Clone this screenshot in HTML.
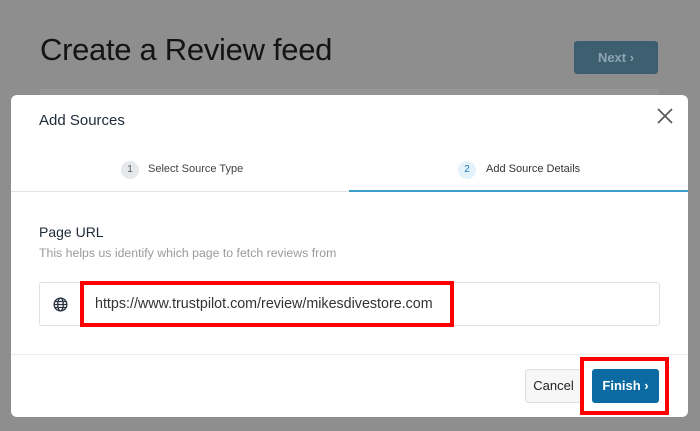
<!DOCTYPE html>
<html><head><style>
*{margin:0;padding:0;box-sizing:border-box}
body{width:700px;height:431px;background:#8e8e8f;font-family:"Liberation Sans",sans-serif;position:relative;overflow:hidden}
.a{position:absolute}
</style></head><body>
<div class="a" style="left:40px;top:32px;font-size:31px;color:#141414;letter-spacing:-0.3px">Create a Review feed</div>
<div class="a" style="left:574px;top:41px;width:84px;height:33px;background:#3d5f70;border-radius:3px;color:#8ea4b0;font-size:13px;font-weight:bold;text-align:center;line-height:33px">Next ›</div>
<div class="a" style="left:40px;top:89px;width:618px;height:8px;background:#959595"></div>
<div class="a" style="left:11px;top:95px;width:677px;height:322px;background:#fff;border-radius:6px"></div>
<div class="a" style="left:39px;top:112px;font-size:15px;color:#1e2a38">Add Sources</div>
<svg class="a" style="left:656px;top:107px" width="18" height="18"><path d="M2 2L16 16M16 2L2 16" stroke="#555" stroke-width="1.6"/></svg>
<div class="a" style="left:121px;top:161px;width:18px;height:18px;border-radius:50%;background:#e6e8ec;color:#555;font-size:10px;text-align:center;line-height:18px">1</div>
<div class="a" style="left:148px;top:163px;font-size:11px;color:#444">Select Source Type</div>
<div class="a" style="left:458px;top:161px;width:18px;height:18px;border-radius:50%;background:#e3f2fb;color:#1b77b0;font-size:10px;text-align:center;line-height:18px">2</div>
<div class="a" style="left:486px;top:163px;font-size:11px;color:#333">Add Source Details</div>
<div class="a" style="left:11px;top:191px;width:338px;height:1px;background:#e3e3e3"></div>
<div class="a" style="left:349px;top:190px;width:339px;height:2px;background:#3aa0c8"></div>
<div class="a" style="left:39px;top:224px;font-size:14px;color:#1e2a38">Page URL</div>
<div class="a" style="left:39px;top:246px;font-size:12.3px;color:#9a9a9a">This helps us identify which page to fetch reviews from</div>
<div class="a" style="left:39px;top:282px;width:621px;height:44px;border:1px solid #e2e2e2;border-radius:3px"></div>
<svg class="a" style="left:53px;top:297px" width="15" height="15" viewBox="0 0 16 16" fill="none" stroke="#2a3340" stroke-width="1.4"><circle cx="8" cy="8" r="6.8"/><ellipse cx="8" cy="8" rx="3" ry="6.8"/><path d="M1.2 8h13.6M2 4.8h12M2 11.2h12"/></svg>
<div class="a" style="left:80px;top:281px;width:374px;height:46px;border:4px solid #f00"></div>
<div class="a" style="left:95px;top:296px;font-size:14.3px;color:#333">https://www.trustpilot.com/review/mikesdivestore.com</div>
<div class="a" style="left:11px;top:354px;width:677px;height:1px;background:#ececec"></div>
<div class="a" style="left:525px;top:369px;width:57px;height:34px;border:1px solid #ddd;border-radius:3px;background:#f7f7f7;font-size:13px;color:#222;text-align:center;line-height:32px">Cancel</div>
<div class="a" style="left:580px;top:357px;width:89px;height:58px;border:4px solid #f00"></div>
<div class="a" style="left:592px;top:369px;width:67px;height:34px;border-radius:3px;background:#0a6aa1;font-size:13px;font-weight:bold;color:#fff;text-align:center;line-height:34px">Finish ›</div>
</body></html>
